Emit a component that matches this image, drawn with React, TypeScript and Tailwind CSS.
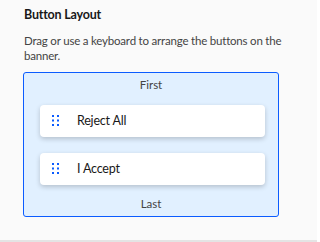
import React from "react"

// ── Drag handle ────────────────────────────────────────────────────────────────

function Grip() {
  return (
    <svg width="8" height="12" viewBox="0 0 8 12" className="shrink-0">
      {[1, 5.5, 10].map((y) =>
        [1, 6].map((x) => <rect key={`${x}-${y}`} x={x - 1} y={y - 1} width="2" height="2" fill="#0b5cff" />)
      )}
    </svg>
  )
}

function DragItem({ label }: { label: string }) {
  return (
    <div className="flex items-center h-[32px] bg-white rounded-[4px] shadow-[0_2px_5px_rgba(0,0,0,0.2)] pl-[12px]">
      <Grip />
      <span className="ml-[17px] text-[12.5px] tracking-[-0.2px] text-[#181818]">{label}</span>
    </div>
  )
}

// ── Page ───────────────────────────────────────────────────────────────────────

export default function App() {
  const items = ["Reject All", "I Accept"]
  return (
    <div
      className="w-[317px] h-[242px] bg-[#fafafa] border-b-2 border-[#e4e4e4] pl-[23px] pt-[6px]"
      style={{ fontFamily: "Lato, 'Noto Sans', sans-serif" }}
    >
      <h2 className="text-[12.5px] font-bold leading-[18px] tracking-[-0.2px] text-[#181818] pl-px">Button Layout</h2>
      <p className="mt-[9px] text-[11.5px] leading-[15px] tracking-[-0.2px] text-[#444444] pl-px w-[262px]">
        Drag or use a keyboard to arrange the buttons on the banner.
      </p>
      <div className="mt-[9px] w-[256px] h-[145px] border border-[#0b5cff] rounded-[3px] bg-[#e1f0ff] flex flex-col">
        <div className="text-center text-[11.5px] leading-[15px] text-[#444444] mt-[4px]">First</div>
        <div className="flex flex-col gap-[16px] mt-[13px] pl-[16px] pr-[13px]">
          {items.map((it) => (
            <DragItem key={it} label={it} />
          ))}
        </div>
        <div className="text-center text-[11.5px] leading-[15px] text-[#444444] mt-[11px]">Last</div>
      </div>
    </div>
  )
}
